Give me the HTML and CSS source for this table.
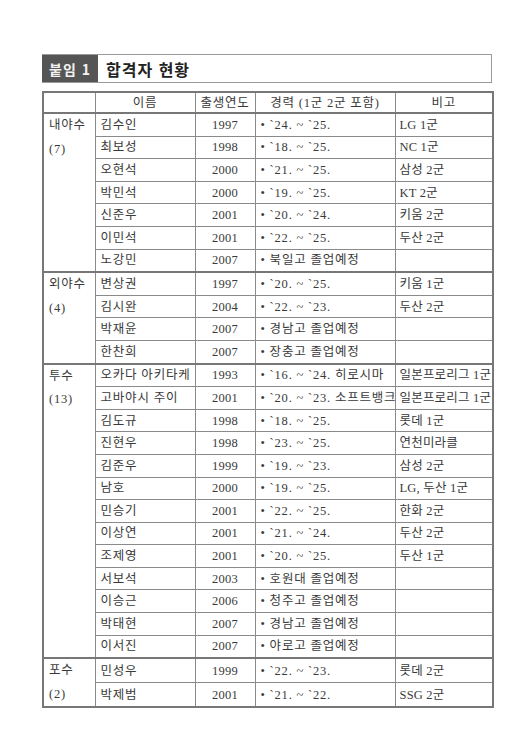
FILE: index.html
```html
<!DOCTYPE html>
<html lang="ko">
<head>
<meta charset="utf-8">
<link rel="stylesheet" href="styles.css">
</head>
<body>
<div class="page">
  <div class="title-bar">
    <div class="tag">붙임 1</div>
    <div class="title">합격자 현황</div>
  </div>
  <table class="roster">
    <colgroup>
      <col class="c1"><col class="c2"><col class="c3"><col class="c4"><col class="c5">
    </colgroup>
    <thead>
      <tr class="head">
        <th></th><th>이름</th><th>출생연도</th><th>경력 (1군 2군 포함)</th><th>비고</th>
      </tr>
    </thead>
    <tbody class="grp">
      <tr><td class="cat" rowspan="7"><div>내야수</div><div>(7)</div></td><td>김수인</td><td class="yr">1997</td><td>• `24. ~ `25.</td><td class="note">LG 1군</td></tr>
      <tr><td>최보성</td><td class="yr">1998</td><td>• `18. ~ `25.</td><td class="note">NC 1군</td></tr>
      <tr><td>오현석</td><td class="yr">2000</td><td>• `21. ~ `25.</td><td class="note">삼성 2군</td></tr>
      <tr><td>박민석</td><td class="yr">2000</td><td>• `19. ~ `25.</td><td class="note">KT 2군</td></tr>
      <tr><td>신준우</td><td class="yr">2001</td><td>• `20. ~ `24.</td><td class="note">키움 2군</td></tr>
      <tr><td>이민석</td><td class="yr">2001</td><td>• `22. ~ `25.</td><td class="note">두산 2군</td></tr>
      <tr><td>노강민</td><td class="yr">2007</td><td>• 북일고 졸업예정</td><td class="note"></td></tr>
    </tbody>
    <tbody class="grp">
      <tr><td class="cat" rowspan="4"><div>외야수</div><div>(4)</div></td><td>변상권</td><td class="yr">1997</td><td>• `20. ~ `25.</td><td class="note">키움 1군</td></tr>
      <tr><td>김시완</td><td class="yr">2004</td><td>• `22. ~ `23.</td><td class="note">두산 2군</td></tr>
      <tr><td>박재윤</td><td class="yr">2007</td><td>• 경남고 졸업예정</td><td class="note"></td></tr>
      <tr><td>한찬희</td><td class="yr">2007</td><td>• 장충고 졸업예정</td><td class="note"></td></tr>
    </tbody>
    <tbody class="grp">
      <tr><td class="cat" rowspan="13"><div>투수</div><div>(13)</div></td><td>오카다 아키타케</td><td class="yr">1993</td><td>• `16. ~ `24. 히로시마</td><td class="note">일본프로리그 1군</td></tr>
      <tr><td>고바야시 주이</td><td class="yr">2001</td><td>• `20. ~ `23. 소프트뱅크</td><td class="note">일본프로리그 1군</td></tr>
      <tr><td>김도규</td><td class="yr">1998</td><td>• `18. ~ `25.</td><td class="note">롯데 1군</td></tr>
      <tr><td>진현우</td><td class="yr">1998</td><td>• `23. ~ `25.</td><td class="note">연천미라클</td></tr>
      <tr><td>김준우</td><td class="yr">1999</td><td>• `19. ~ `23.</td><td class="note">삼성 2군</td></tr>
      <tr><td>남호</td><td class="yr">2000</td><td>• `19. ~ `25.</td><td class="note">LG, 두산 1군</td></tr>
      <tr><td>민승기</td><td class="yr">2001</td><td>• `22. ~ `25.</td><td class="note">한화 2군</td></tr>
      <tr><td>이상연</td><td class="yr">2001</td><td>• `21. ~ `24.</td><td class="note">두산 2군</td></tr>
      <tr><td>조제영</td><td class="yr">2001</td><td>• `20. ~ `25.</td><td class="note">두산 1군</td></tr>
      <tr><td>서보석</td><td class="yr">2003</td><td>• 호원대 졸업예정</td><td class="note"></td></tr>
      <tr><td>이승근</td><td class="yr">2006</td><td>• 청주고 졸업예정</td><td class="note"></td></tr>
      <tr><td>박태현</td><td class="yr">2007</td><td>• 경남고 졸업예정</td><td class="note"></td></tr>
      <tr><td>이서진</td><td class="yr">2007</td><td>• 야로고 졸업예정</td><td class="note"></td></tr>
    </tbody>
    <tbody class="grp">
      <tr><td class="cat" rowspan="2"><div>포수</div><div>(2)</div></td><td>민성우</td><td class="yr">1999</td><td>• `22. ~ `23.</td><td class="note">롯데 2군</td></tr>
      <tr><td>박제범</td><td class="yr">2001</td><td>• `21. ~ `22.</td><td class="note">SSG 2군</td></tr>
    </tbody>
  </table>
</div>
</body>
</html>
```
FILE: styles.css
```css
html, body {
  margin: 0;
  padding: 0;
  background: #fff;
}
.page {
  width: 530px;
  padding: 54px 0 0 42px;
  box-sizing: border-box;
  font-family: "Liberation Serif", "Noto Sans CJK KR", serif;
  color: #3a3a3a;
}
.title-bar {
  width: 450px;
  height: 29px;
  box-sizing: border-box;
  border: 1px solid #9a9a9a;
  border-left: none;
  display: flex;
  align-items: stretch;
}
.tag {
  width: 56px;
  background: #555;
  color: #f2f2f2;
  font-family: "Noto Sans CJK KR", sans-serif;
  font-weight: 700;
  font-size: 14px;
  display: flex;
  align-items: center;
  justify-content: center;
  letter-spacing: 1px;
}
.title {
  padding-left: 8px;
  font-family: "Noto Sans CJK KR", sans-serif;
  font-weight: 700;
  font-size: 16px;
  color: #222;
  display: flex;
  align-items: center;
  letter-spacing: 1px;
}
.roster {
  margin-top: 8px;
  width: 450px;
  border-collapse: collapse;
  table-layout: fixed;
  border: 2px solid #777;
  font-size: 12.5px;
}
.c1 { width: 52px; }
.c2 { width: 100px; }
.c3 { width: 60px; }
.c4 { width: 140px; }
.c5 { width: 98px; }
.roster th, .roster td {
  border: 1px solid #8a8a8a;
  padding: 0 0 0 5px;
  text-align: left;
  font-weight: 400;
  white-space: nowrap;
  overflow: hidden;
  height: 21.6px;
  line-height: 16px;
  letter-spacing: 0.8px;
  font-family: "Liberation Serif", "Noto Sans CJK KR", serif;
}
.roster .head th {
  height: 19px;
  text-align: center;
  padding: 0;
  border-bottom: 2px solid #777;
}
.roster td.yr {
  text-align: center;
  padding: 0;
  letter-spacing: 0.3px;
}
.roster td.note {
  padding-left: 4px;
  letter-spacing: 0.2px;
}
.roster td.cat {
  vertical-align: top;
  padding: 0 0 0 5px;
  border-bottom: none;
}
.roster td.cat div {
  height: 23.6px;
  line-height: 23.6px;
}
.roster .grp + .grp tr:first-child td {
  border-top: 2px solid #777;
}
```
